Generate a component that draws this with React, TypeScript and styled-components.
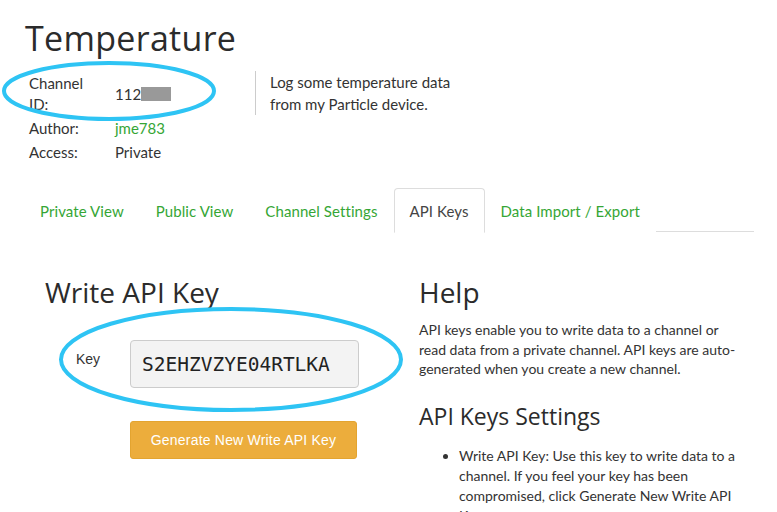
import React from "react";
import styled, { createGlobalStyle } from "styled-components";

const Global = createGlobalStyle`
  html, body { margin: 0; padding: 0; background: #fff; }
  body { font-family: "Lato", "Noto Sans", sans-serif; color: #333; }
  * { box-sizing: border-box; }
`;

const Page = styled.div`
  position: relative;
  width: 777px;
  height: 512px;
  overflow: hidden;
  padding: 0 23px 0 24px;
`;

const Title = styled.h1`
  margin: 0;
  padding: 16px 0 0 1px;
  font-family: "Open Sans", sans-serif;
  font-weight: 400;
  font-size: 34px;
  line-height: 44px;
  color: #2b2b2b;
  letter-spacing: 0.3px;
`;

const InfoRow = styled.div`
  display: flex;
  align-items: flex-start;
  margin-top: 13px;
  padding-left: 5px;
`;

const Meta = styled.div`
  display: grid;
  grid-template-columns: 86px auto;
  width: 226px;
  font-size: 15px;
  line-height: 21px;
  row-gap: 3px;
`;

const MetaLabel = styled.div`
  width: 60px;
`;

const MetaValue = styled.div<{ $green?: boolean }>`
  display: flex;
  align-items: center;
  color: ${(p) => (p.$green ? "#35a635" : "#333")};
`;

const Masked = styled.span`
  display: inline-block;
  width: 30px;
  height: 14px;
  background: #999;
`;

const Description = styled.div`
  border-left: 1px solid #ccc;
  padding: 0 0 0 14px;
  margin-top: -2px;
  font-size: 15px;
  line-height: 22px;
  width: 210px;
  height: 44px;
`;

const Tabs = styled.div`
  display: flex;
  margin-top: 25px;
  border-bottom: 1px solid #ddd;
  height: 44px;
  padding-left: 0px;
`;

const Tab = styled.div<{ $active?: boolean }>`
  padding: 0 15px;
  display: flex;
  align-items: center;
  font-size: 15px;
  letter-spacing: 0.08px;
  color: ${(p) => (p.$active ? "#444" : "#35a635")};
  border: 1px solid ${(p) => (p.$active ? "#ddd" : "transparent")};
  border-bottom-color: ${(p) => (p.$active ? "#fff" : "transparent")};
  border-radius: 4px 4px 0 0;
  margin-bottom: -1px;
  height: 45px;
  background: #fff;
`;

const Columns = styled.div`
  display: grid;
  grid-template-columns: 395px 1fr;
  padding-top: 51px;
`;

const Left = styled.div`
  padding-left: 21px;
`;

const Right = styled.div``;

const H2 = styled.h2`
  margin: 0;
  font-family: "Open Sans", sans-serif;
  font-weight: 400;
  font-size: 28px;
  line-height: 38px;
  color: #2b2b2b;
  margin-top: -10px;
`;

const H3 = styled.h3`
  margin: 22px 0 0;
  font-family: "Open Sans", sans-serif;
  font-weight: 400;
  font-size: 23px;
  line-height: 30px;
  color: #2b2b2b;
`;

const KeyRow = styled.div`
  display: flex;
  align-items: flex-start;
  margin-top: 29px;
`;

const KeyLabel = styled.div`
  width: 85px;
  padding-left: 31px;
  padding-top: 11px;
  font-family: "Liberation Sans", sans-serif;
  font-size: 14px;
  color: #333;
`;

const KeyBox = styled.div`
  width: 229px;
  height: 48px;
  background: #f3f3f3;
  border: 1px solid #ccc;
  border-radius: 4px;
  display: flex;
  align-items: center;
  padding-left: 11px;
  font-family: "DejaVu Sans Mono", monospace;
  font-size: 19.5px;
  color: #222;
`;

const Button = styled.button`
  display: block;
  margin: 33px 0 0 85px;
  width: 227px;
  height: 38px;
  background: #ecad3c;
  border: 1px solid #e3a430;
  border-radius: 3px;
  color: #fff;
  font-family: "Liberation Sans", sans-serif;
  font-size: 14px;
  letter-spacing: 0.2px;
  padding: 0;
`;

const Para = styled.p`
  margin: 9px 0 0;
  font-size: 14px;
  line-height: 19.5px;
  width: 320px;
`;

const List = styled.ul`
  margin: 15px 0 0;
  padding-left: 40px;
  font-size: 14px;
  line-height: 20px;
  width: 320px;
`;

const Ring = styled.svg`
  position: absolute;
  pointer-events: none;
  overflow: visible;
`;

function Ellipse({ x, y, w, h }: { x: number; y: number; w: number; h: number }) {
  return (
    <Ring style={{ left: x, top: y, width: w, height: h }} viewBox={`0 0 ${w} ${h}`}>
      <ellipse cx={w / 2} cy={h / 2} rx={w / 2 - 2} ry={h / 2 - 2} fill="none" stroke="#2ec4f4" strokeWidth={4} />
    </Ring>
  );
}

export default function App() {
  return (
    <>
      <Global />
      <Page>
        <Title>Temperature</Title>
        <InfoRow>
          <Meta>
            <MetaLabel>Channel ID:</MetaLabel>
            <MetaValue>
              112
              <Masked />
            </MetaValue>
            <MetaLabel>Author:</MetaLabel>
            <MetaValue $green>jme783</MetaValue>
            <MetaLabel>Access:</MetaLabel>
            <MetaValue>Private</MetaValue>
          </Meta>
          <Description>Log some temperature data from my Particle device.</Description>
        </InfoRow>
        <Tabs>
          <Tab>Private View</Tab>
          <Tab>Public View</Tab>
          <Tab>Channel Settings</Tab>
          <Tab $active>API Keys</Tab>
          <Tab>Data Import / Export</Tab>
        </Tabs>
        <Columns>
          <Left>
            <H2>Write API Key</H2>
            <KeyRow>
              <KeyLabel>Key</KeyLabel>
              <KeyBox>S2EHZVZYE04RTLKA</KeyBox>
            </KeyRow>
            <Button>Generate New Write API Key</Button>
          </Left>
          <Right>
            <H2>Help</H2>
            <Para>
              API keys enable you to write data to a channel or read data from a private channel. API keys are
              auto-generated when you create a new channel.
            </Para>
            <H3>API Keys Settings</H3>
            <List>
              <li>
                Write API Key: Use this key to write data to a channel. If you feel your key has been compromised,
                click Generate New Write API Key.
              </li>
            </List>
          </Right>
        </Columns>
        <Ellipse x={2} y={61} w={214} h={60} />
        <Ellipse x={59} y={307} w={344} h={105} />
      </Page>
    </>
  );
}
